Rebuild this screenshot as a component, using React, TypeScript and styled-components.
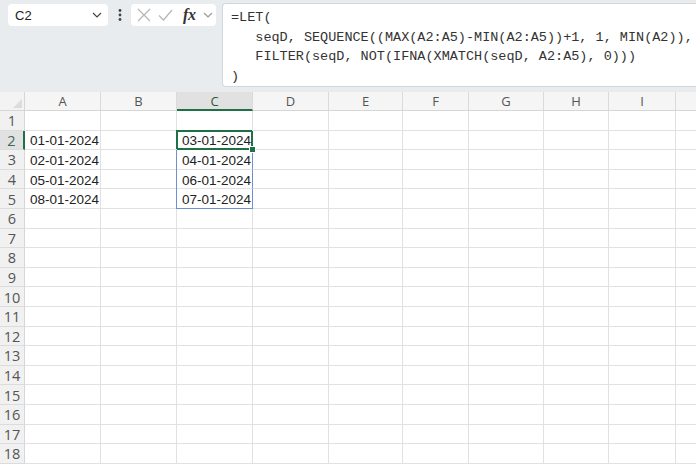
import React, { ReactElement } from 'react';
import styled, { createGlobalStyle, css } from 'styled-components';

const GlobalStyle = createGlobalStyle`
  html, body {
    margin: 0;
    padding: 0;
    background: #ffffff;
    overflow: hidden;
  }
  body {
    font-family: 'Liberation Sans', Arial, sans-serif;
  }
`;

const Page = styled.div`
  width: 696px;
  height: 464px;
  display: flex;
  flex-direction: column;
  overflow: hidden;
`;

const Toolbar = styled.div`
  height: 92px;
  flex: none;
  background: #e9ecef;
  display: flex;
  align-items: flex-start;
  padding: 3px 0 0 8px;
  box-sizing: border-box;
`;

const NameBox = styled.div`
  width: 100px;
  height: 22px;
  margin-top: 1px;
  background: #ffffff;
  border-radius: 4px;
  display: flex;
  align-items: center;
  justify-content: space-between;
  padding: 0 6px 0 7px;
  box-sizing: border-box;
  font-size: 13px;
  color: #222;
`;

const Dots = styled.div`
  width: 23px;
  height: 24px;
  display: flex;
  align-items: center;
  justify-content: center;
`;

const IconBox = styled.div`
  width: 85px;
  height: 22px;
  margin-top: 1px;
  background: #ffffff;
  border-radius: 4px;
  display: flex;
  align-items: center;
  padding: 0 0 0 6px;
  box-sizing: border-box;
  gap: 7px;
`;

const Fx = styled.span`
  font-family: 'Liberation Serif', 'Times New Roman', serif;
  font-style: italic;
  font-weight: 700;
  font-size: 16px;
  color: #333;
  margin-left: 3px;
  letter-spacing: -0.3px;
`;

const FormulaBar = styled.div`
  flex: 1;
  height: 84px;
  margin-left: 6px;
  background: #ffffff;
  border: 1px solid #d3d7db;
  border-right: none;
  border-radius: 4px 0 0 4px;
  box-sizing: border-box;
  padding: 4px 0 0 8px;
  font-family: 'Liberation Mono', 'DejaVu Sans Mono', monospace;
  font-size: 13.5px;
  line-height: 19.5px;
  color: #333;
  white-space: pre;
  overflow: hidden;
`;

const COLS = [76, 76, 76, 76, 74, 66, 75, 65, 67, 40];
const LETTERS = ['A', 'B', 'C', 'D', 'E', 'F', 'G', 'H', 'I', ''];

const Sheet = styled.div`
  display: grid;
  grid-template-columns: 25px ${COLS.map((c) => `${c}px`).join(' ')};
  grid-template-rows: 19px repeat(18, 19.6px);
  flex: none;
`;

const Corner = styled.div`
  background: #f3f3f3;
  border-right: 1px solid #d6d6d6;
  border-bottom: 1px solid #d6d6d6;
  position: relative;
  &::after {
    content: '';
    position: absolute;
    right: 2px;
    bottom: 2px;
    border-left: 9px solid transparent;
    border-bottom: 9px solid #dcdcdc;
  }
`;

const ColHeader = styled.div<{ $active?: boolean }>`
  background: ${(p) => (p.$active ? '#e1e1e1' : '#f5f5f5')};
  border-right: 1px solid #dadada;
  border-bottom: ${(p) => (p.$active ? '2px solid #1e7145' : '1px solid #d6d6d6')};
  display: flex;
  align-items: center;
  justify-content: center;
  font-family: 'Open Sans', 'Noto Sans', sans-serif;
  font-size: 13px;
  color: ${(p) => (p.$active ? '#2c5a40' : '#555')};
`;

const RowHeader = styled.div<{ $active?: boolean }>`
  background: ${(p) => (p.$active ? '#e1e1e1' : '#f1f1f1')};
  border-right: ${(p) => (p.$active ? '2px solid #1e7145' : '1px solid #d6d6d6')};
  border-bottom: 1px solid #dcdcdc;
  display: flex;
  align-items: center;
  justify-content: center;
  padding-top: 1px;
  font-family: 'Open Sans', 'Noto Sans', sans-serif;
  font-size: 14.5px;
  color: ${(p) => (p.$active ? '#3d6b52' : '#555')};
`;

type Mark = 'none' | 'active' | 'spill' | 'spillEnd';

const Cell = styled.div<{ $mark: Mark }>`
  border-right: 1px solid #e1e1e1;
  border-bottom: 1px solid #e1e1e1;
  display: flex;
  align-items: center;
  padding: 2px 0 0 5px;
  font-family: 'Liberation Sans', Arial, sans-serif;
  font-size: 13.5px;
  color: #222;
  white-space: nowrap;
  position: relative;
  ${(p) =>
    p.$mark === 'active' &&
    css`
      z-index: 2;
      box-shadow: -1px -1px 0 0 #1e7145, inset 0 0 0 1px #1e7145;
      border-color: #1e7145;
      &::after {
        content: '';
        position: absolute;
        right: -4px;
        bottom: -4px;
        width: 5px;
        height: 5px;
        background: #1e7145;
        border: 1px solid #ffffff;
      }
    `}
  ${(p) =>
    (p.$mark === 'spill' || p.$mark === 'spillEnd') &&
    css`
      z-index: 1;
      box-shadow: -1px 0 0 0 #6f8fce;
      border-right-color: #6f8fce;
    `}
  ${(p) =>
    p.$mark === 'spillEnd' &&
    css`
      border-bottom-color: #6f8fce;
    `}
`;

const Chevron = ({ color = '#555' }: { color?: string }): ReactElement => (
  <svg width="10" height="6" viewBox="0 0 10 6">
    <path d="M1 1l4 4 4-4" fill="none" stroke={color} strokeWidth="1.2" />
  </svg>
);

const values: Record<string, string> = {
  A2: '01-01-2024',
  A3: '02-01-2024',
  A4: '05-01-2024',
  A5: '08-01-2024',
  C2: '03-01-2024',
  C3: '04-01-2024',
  C4: '06-01-2024',
  C5: '07-01-2024',
};

const markFor = (col: string, row: number): Mark => {
  if (col !== 'C') return 'none';
  if (row === 2) return 'active';
  if (row === 3 || row === 4) return 'spill';
  if (row === 5) return 'spillEnd';
  return 'none';
};

const formula = `=LET(
   seqD, SEQUENCE((MAX(A2:A5)-MIN(A2:A5))+1, 1, MIN(A2)),
   FILTER(seqD, NOT(IFNA(XMATCH(seqD, A2:A5), 0)))
)`;

const App = (): ReactElement => {
  const rows = Array.from({ length: 18 }, (_, i) => i + 1);
  return (
    <Page>
      <GlobalStyle />
      <Toolbar>
        <NameBox>
          <span>C2</span>
          <Chevron color="#444" />
        </NameBox>
        <Dots>
          <svg width="4" height="14" viewBox="0 0 4 14">
            <circle cx="2" cy="2.5" r="1.4" fill="#444" />
            <circle cx="2" cy="7" r="1.4" fill="#444" />
            <circle cx="2" cy="11.5" r="1.4" fill="#444" />
          </svg>
        </Dots>
        <IconBox>
          <svg width="14" height="14" viewBox="0 0 14 14">
            <path d="M1 1l12 12M13 1L1 13" stroke="#b5b5b5" strokeWidth="1.2" fill="none" />
          </svg>
          <svg width="15" height="12" viewBox="0 0 15 12">
            <path d="M1 6.5l4.5 4.5L14 1" stroke="#b5b5b5" strokeWidth="1.2" fill="none" />
          </svg>
          <Fx>fx</Fx>
          <Chevron color="#999" />
        </IconBox>
        <FormulaBar>{formula}</FormulaBar>
      </Toolbar>
      <Sheet>
        <Corner />
        {LETTERS.map((l, i) => (
          <ColHeader key={`h${i}`} $active={l === 'C'}>
            {l}
          </ColHeader>
        ))}
        {rows.map((r) => (
          <React.Fragment key={r}>
            <RowHeader $active={r === 2}>{r}</RowHeader>
            {LETTERS.map((l, i) => (
              <Cell key={`${r}-${i}`} $mark={markFor(l, r)}>
                {values[`${l}${r}`] ?? ''}
              </Cell>
            ))}
          </React.Fragment>
        ))}
      </Sheet>
    </Page>
  );
};

export default App;
